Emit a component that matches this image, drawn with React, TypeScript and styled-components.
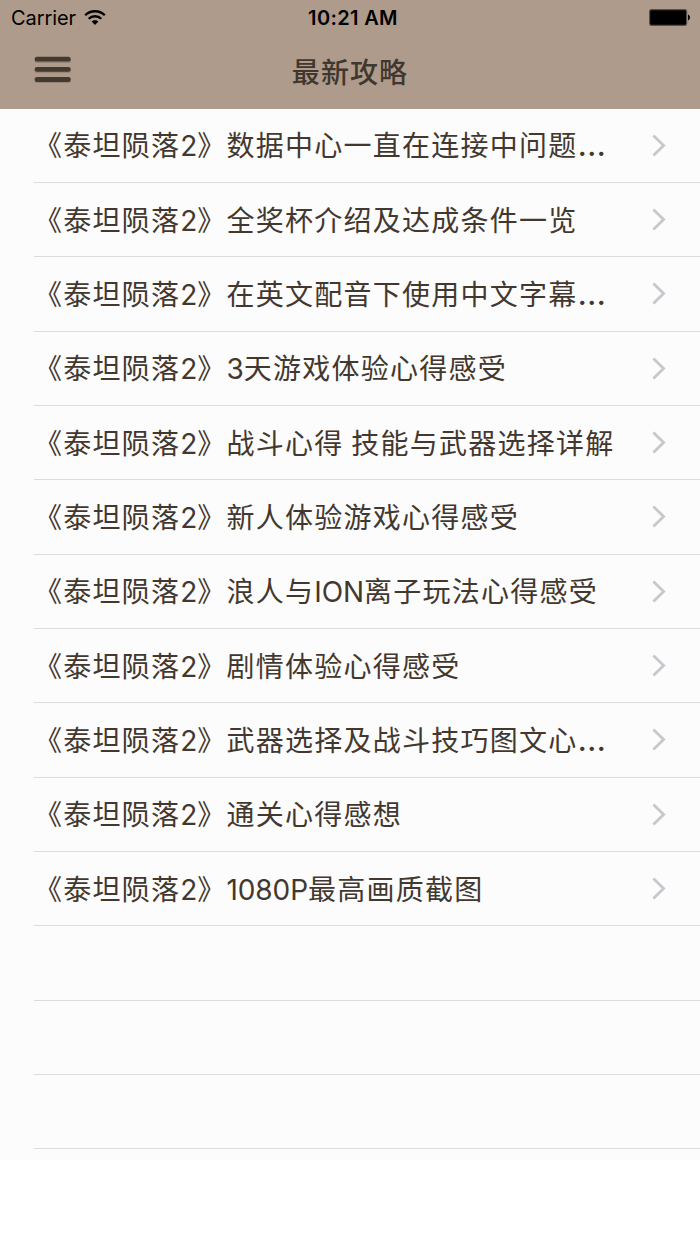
import React from 'react';
import styled, { createGlobalStyle } from 'styled-components';

const GlobalStyle = createGlobalStyle`
  body {
    margin: 0;
    background: #ffffff;
    font-family: Inter, "Noto Sans CJK SC", sans-serif;
  }
`;

const Screen = styled.div`
  width: 700px;
  height: 1244px;
  display: flex;
  flex-direction: column;
  overflow: hidden;
  background: #ffffff;
`;

const Header = styled.header`
  height: 108.6px;
  flex: none;
  background: #ae9b8b;
`;

const StatusBar = styled.div`
  height: 35px;
  display: grid;
  grid-template-columns: 1fr auto 1fr;
  align-items: center;
  padding: 0 9px 0 11px;
  color: #000000;
  font-size: 20px;
  line-height: 35px;
`;

const Carrier = styled.div`
  display: flex;
  align-items: center;
  gap: 8px;
  letter-spacing: -0.08px;
  padding-top: 1px;
`;

const WifiIcon = styled.svg`
  display: block;
  margin-bottom: 3px;
`;

const Clock = styled.div`
  font-weight: 600;
  font-size: 20px;
  letter-spacing: 0.35px;
  padding: 1px 0 0 4px;
`;

const Battery = styled.svg`
  justify-self: end;
  display: block;
  margin-bottom: 2px;
`;

const NavBar = styled.nav`
  height: 73px;
  display: grid;
  grid-template-columns: 100px 1fr 100px;
  align-items: center;
`;

const MenuButton = styled.button`
  display: flex;
  width: 37px;
  margin: 0 0 4px 34px;
  padding: 0;
  border: 0;
  background: none;
`;

const NavTitle = styled.h1`
  margin: 0;
  padding-top: 2px;
  text-align: center;
  font-size: 28px;
  line-height: 42px;
  letter-spacing: 1.1px;
  font-weight: 500;
  color: #40372e;
`;

const List = styled.ul`
  margin: 0;
  padding: 0;
  list-style: none;
  height: 1051px;
  flex: none;
  background: #fcfcfc;
`;

const Row = styled.li`
  height: 74.33px;
  box-sizing: border-box;
  margin-left: 34px;
  padding-right: 34px;
  display: flex;
  align-items: center;
  justify-content: space-between;
  border-bottom: 1px solid #dcdcdc;
`;

const RowTitle = styled.span`
  padding-top: 2px;
  font-size: 28px;
  line-height: 42px;
  letter-spacing: 1.25px;
  word-spacing: -1.4px;
  font-weight: 400;
  color: #43382f;
  white-space: nowrap;
`;

const Latin = styled.span`
  letter-spacing: -0.1px;
`;

const Ellipsis = styled.span`
  font-size: 33px;
  line-height: 0;
  letter-spacing: 0;
`;

const Chevron = styled.svg`
  display: block;
  flex: none;
`;

const titles = [
  '数据中心一直在连接中问题…',
  '全奖杯介绍及达成条件一览',
  '在英文配音下使用中文字幕…',
  '3天游戏体验心得感受',
  '战斗心得 技能与武器选择详解',
  '新人体验游戏心得感受',
  '浪人与ION离子玩法心得感受',
  '剧情体验心得感受',
  '武器选择及战斗技巧图文心…',
  '通关心得感想',
  '1080P最高画质截图',
];

const EMPTY_ROWS = 3;

function MixedText({ text }: { text: string }) {
  return (
    <>
      {text.split(/([0-9A-Za-z]+|…)/).map((part, i) => {
        if (part === '…') return <Ellipsis key={i}>{part}</Ellipsis>;
        return i % 2 ? <Latin key={i}>{part}</Latin> : part;
      })}
    </>
  );
}

export default function App() {
  return (
    <Screen>
      <GlobalStyle />
      <Header>
        <StatusBar>
          <Carrier>
            Carrier
            <WifiIcon width="22" height="17" viewBox="0 0 22 17" fill="none" stroke="#000" strokeWidth="2.3">
              <path d="M1.2 6.2C6.6 .9 15.4 .9 20.8 6.2" />
              <path d="M4.7 9.8C8.2 6.4 13.8 6.4 17.3 9.8" />
              <path d="M7.6 12.5C9.5 10.7 12.5 10.7 14.4 12.5L11 16Z" fill="#000" stroke="none" />
            </WifiIcon>
          </Carrier>
          <Clock>10:21 AM</Clock>
          <Battery width="42" height="17" viewBox="0 0 42 17">
            <rect x="0.6" y="0.6" width="37" height="15.8" rx="1.8" fill="#000" stroke="#574e46" strokeWidth="1.2" />
            <path d="M39 5.5C41.6 6.5 41.6 10.5 39 11.5Z" fill="#000" />
          </Battery>
        </StatusBar>
        <NavBar>
          <MenuButton aria-label="菜单">
            <svg width="37" height="28" viewBox="0 0 37 28">
              <g fill="#81736680">
                <rect x="0.5" y="1.5" width="36.5" height="5.5" rx="2.5" />
                <rect x="0.5" y="11.5" width="36.5" height="5.5" rx="2.5" />
                <rect x="0.5" y="21.5" width="36.5" height="5.5" rx="2.5" />
              </g>
              <g fill="#43392f">
                <rect x="0.7" y="0.8" width="36" height="4.8" rx="2.2" />
                <rect x="0.7" y="11" width="36" height="4.8" rx="2.2" />
                <rect x="0.7" y="21.1" width="36" height="4.8" rx="2.2" />
              </g>
            </svg>
          </MenuButton>
          <NavTitle>最新攻略</NavTitle>
        </NavBar>
      </Header>
      <List>
        {titles.map((title) => (
          <Row key={title}>
            <RowTitle>
              <MixedText text={`《泰坦陨落2》${title}`} />
            </RowTitle>
            <Chevron width="14" height="23" viewBox="0 0 14 23" fill="none" stroke="#c7c7cc" strokeWidth="2.8">
              <path d="M1.4 1.5L11.6 11.5L1.4 21.5" />
            </Chevron>
          </Row>
        ))}
        {Array.from({ length: EMPTY_ROWS }, (_, i) => (
          <Row key={i} />
        ))}
      </List>
    </Screen>
  );
}
